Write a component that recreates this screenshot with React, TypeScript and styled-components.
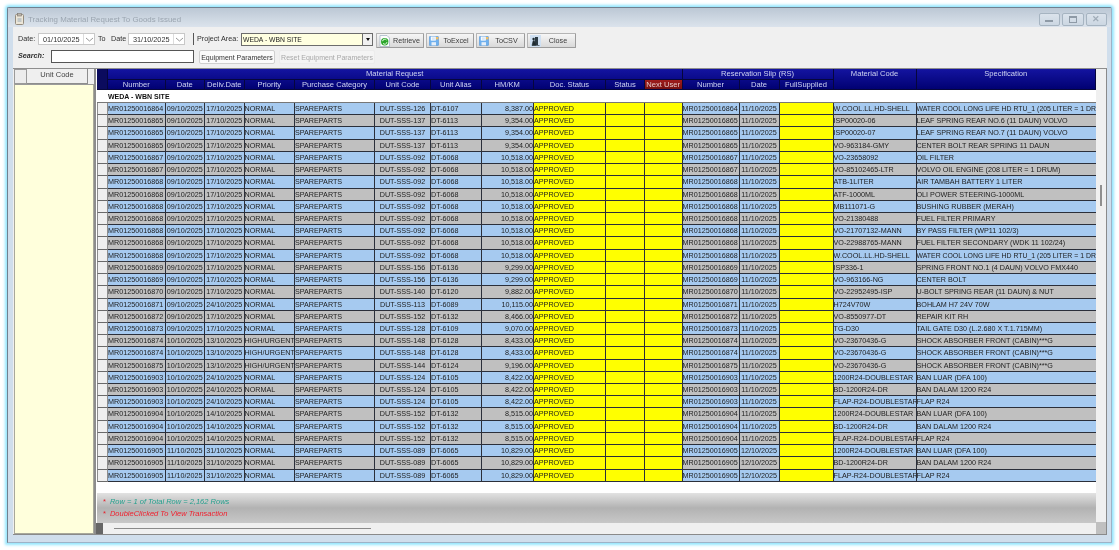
import React from "react";
import styled, { createGlobalStyle } from "styled-components";

const GlobalStyle = createGlobalStyle`
  html, body {
    margin: 0;
    background: #ffffff;
    font-family: "Liberation Sans", Arial, sans-serif;
  }
  * { box-sizing: border-box; }
`;

const COLUMNS =
  "11px 57.5px 39.5px 39.5px 50.5px 80px 56px 50.5px 52.5px 72px 39px 37.5px 57px 40px 54px 83px 179.5px";

type Row = {
  no: string;
  date: string;
  deliv: string;
  priority: string;
  unit: string;
  alias: string;
  hm: string;
  rsDate: string;
  code: string;
  spec: string;
};

const row = (
  no: string,
  date: string,
  deliv: string,
  priority: string,
  unit: string,
  alias: string,
  hm: string,
  rsDate: string,
  code: string,
  spec: string
): Row => ({ no, date, deliv, priority, unit, alias, hm, rsDate, code, spec });

const D09 = "09/10/2025";
const D10 = "10/10/2025";
const D11 = "11/10/2025";
const D12 = "12/10/2025";
const D13 = "13/10/2025";
const D14 = "14/10/2025";
const D17 = "17/10/2025";
const D24 = "24/10/2025";
const D31 = "31/10/2025";
const NOR = "NORMAL";
const HI = "HIGH/URGENT";
const S092 = "DUT-SSS-092";
const COOL = "WATER COOL LONG LIFE HD RTU_1 (205 LITER = 1 DR";

const rows: Row[] = [
  row("864", D09, D17, NOR, "DUT-SSS-126", "DT-6107", "8,387.00", D11, "W.COOL.LL.HD-SHELL", COOL),
  row("865", D09, D17, NOR, "DUT-SSS-137", "DT-6113", "9,354.00", D11, "ISP00020-06", "LEAF SPRING REAR NO.6 (11 DAUN) VOLVO"),
  row("865", D09, D17, NOR, "DUT-SSS-137", "DT-6113", "9,354.00", D11, "ISP00020-07", "LEAF SPRING REAR NO.7 (11 DAUN) VOLVO"),
  row("865", D09, D17, NOR, "DUT-SSS-137", "DT-6113", "9,354.00", D11, "VO-963184-GMY", "CENTER BOLT REAR SPRING 11 DAUN"),
  row("867", D09, D17, NOR, S092, "DT-6068", "10,518.00", D11, "VO-23658092", "OIL FILTER"),
  row("867", D09, D17, NOR, S092, "DT-6068", "10,518.00", D11, "VO-85102465-LTR", "VOLVO OIL ENGINE (208 LITER = 1 DRUM)"),
  row("868", D09, D17, NOR, S092, "DT-6068", "10,518.00", D11, "ATB-1LITER", "AIR TAMBAH BATTERY 1 LITER"),
  row("868", D09, D17, NOR, S092, "DT-6068", "10,518.00", D11, "ATF-1000ML", "OLI POWER STEERING-1000ML"),
  row("868", D09, D17, NOR, S092, "DT-6068", "10,518.00", D11, "MB111071-G", "BUSHING RUBBER (MERAH)"),
  row("868", D09, D17, NOR, S092, "DT-6068", "10,518.00", D11, "VO-21380488", "FUEL FILTER PRIMARY"),
  row("868", D09, D17, NOR, S092, "DT-6068", "10,518.00", D11, "VO-21707132-MANN", "BY PASS FILTER (WP11 102/3)"),
  row("868", D09, D17, NOR, S092, "DT-6068", "10,518.00", D11, "VO-22988765-MANN", "FUEL FILTER SECONDARY (WDK 11 102/24)"),
  row("868", D09, D17, NOR, S092, "DT-6068", "10,518.00", D11, "W.COOL.LL.HD-SHELL", COOL),
  row("869", D09, D17, NOR, "DUT-SSS-156", "DT-6136", "9,299.00", D11, "ISP336-1", "SPRING FRONT NO.1 (4 DAUN) VOLVO FMX440"),
  row("869", D09, D17, NOR, "DUT-SSS-156", "DT-6136", "9,299.00", D11, "VO-963166-NG", "CENTER BOLT"),
  row("870", D09, D17, NOR, "DUT-SSS-140", "DT-6120", "9,882.00", D11, "VO-22952495-ISP", "U-BOLT SPRING REAR (11 DAUN) & NUT"),
  row("871", D09, D24, NOR, "DUT-SSS-113", "DT-6089", "10,115.00", D11, "H724V70W", "BOHLAM H7 24V 70W"),
  row("872", D09, D17, NOR, "DUT-SSS-152", "DT-6132", "8,466.00", D11, "VO-8550977-DT", "REPAIR KIT RH"),
  row("873", D09, D17, NOR, "DUT-SSS-128", "DT-6109", "9,070.00", D11, "TG-D30", "TAIL GATE D30 (L.2.680 X T.1.715MM)"),
  row("874", D10, D13, HI, "DUT-SSS-148", "DT-6128", "8,433.00", D11, "VO-23670436-G", "SHOCK ABSORBER FRONT (CABIN)***G"),
  row("874", D10, D13, HI, "DUT-SSS-148", "DT-6128", "8,433.00", D11, "VO-23670436-G", "SHOCK ABSORBER FRONT (CABIN)***G"),
  row("875", D10, D13, HI, "DUT-SSS-144", "DT-6124", "9,196.00", D11, "VO-23670436-G", "SHOCK ABSORBER FRONT (CABIN)***G"),
  row("903", D10, D24, NOR, "DUT-SSS-124", "DT-6105", "8,422.00", D11, "1200R24-DOUBLESTAR", "BAN LUAR (DFA 100)"),
  row("903", D10, D24, NOR, "DUT-SSS-124", "DT-6105", "8,422.00", D11, "BD-1200R24-DR", "BAN DALAM 1200 R24"),
  row("903", D10, D24, NOR, "DUT-SSS-124", "DT-6105", "8,422.00", D11, "FLAP-R24-DOUBLESTAR", "FLAP R24"),
  row("904", D10, D14, NOR, "DUT-SSS-152", "DT-6132", "8,515.00", D11, "1200R24-DOUBLESTAR", "BAN LUAR (DFA 100)"),
  row("904", D10, D14, NOR, "DUT-SSS-152", "DT-6132", "8,515.00", D11, "BD-1200R24-DR", "BAN DALAM 1200 R24"),
  row("904", D10, D14, NOR, "DUT-SSS-152", "DT-6132", "8,515.00", D11, "FLAP-R24-DOUBLESTAR", "FLAP R24"),
  row("905", D11, D31, NOR, "DUT-SSS-089", "DT-6065", "10,829.00", D12, "1200R24-DOUBLESTAR", "BAN LUAR (DFA 100)"),
  row("905", D11, D31, NOR, "DUT-SSS-089", "DT-6065", "10,829.00", D12, "BD-1200R24-DR", "BAN DALAM 1200 R24"),
  row("905", D11, D31, NOR, "DUT-SSS-089", "DT-6065", "10,829.00", D12, "FLAP-R24-DOUBLESTAR", "FLAP R24"),
];

function ClipboardIcon() {
  return (
    <svg width="9" height="12" viewBox="0 0 9 12">
      <rect x="0.5" y="1.5" width="8" height="10" rx="1" fill="#ece6d8" stroke="#958c7e" />
      <rect x="2.5" y="0.5" width="4" height="2.5" fill="#bdb6aa" stroke="#7c756e" strokeWidth="0.6" />
      <path d="M2.5 6h4M2.5 8h4" stroke="#8497ad" strokeWidth="0.8" />
    </svg>
  );
}

function RefreshIcon() {
  return (
    <svg width="11" height="12" viewBox="0 0 11 12">
      <path d="M1 .5h7l2.5 2.5v8.5H1z" fill="#fdfdfd" stroke="#9fb0c2" strokeWidth="0.7" />
      <circle cx="5.7" cy="6.7" r="3.7" fill="#2ba52b" />
      <path d="M3.6 6.2a2.2 2.2 0 0 1 3.9-1.2M7.9 7.2a2.2 2.2 0 0 1-3.9 1.2" fill="none" stroke="#e8ffe8" strokeWidth="1" />
    </svg>
  );
}

function SaveIcon() {
  return (
    <svg width="10" height="10" viewBox="0 0 10 10">
      <rect x="0.3" y="0.5" width="9.2" height="9" rx="0.6" fill="#6fb0ee" stroke="#4a8fd0" strokeWidth="0.5" />
      <rect x="1.8" y="0.6" width="5" height="4" fill="#ffffff" />
      <path d="M2.8 2h3M2.8 3.2h3" stroke="#9cbfe2" strokeWidth="0.5" />
      <rect x="2.5" y="6.2" width="4.5" height="3.2" fill="#e6eff8" />
      <rect x="7" y="1" width="2.4" height="2.4" fill="#f3bf62" />
    </svg>
  );
}

function ExitIcon() {
  return (
    <svg width="11" height="12" viewBox="0 0 11 12">
      <rect x="0" y="0" width="11" height="12" fill="#cfe0f2" />
      <path d="M5 2h3v8H5z" fill="#2c3a44" />
      <circle cx="3.6" cy="4" r="1.2" fill="#1e2a30" />
      <path d="M2 10.5l1.2-4.8h1.3l1.2 4.8zM5.5 10.5h4" fill="#1e2a30" stroke="#1e2a30" strokeWidth="0.6" />
    </svg>
  );
}

function CaretDown() {
  return (
    <svg width="9" height="5" viewBox="0 0 9 5">
      <path d="M1 1l3.5 3L8 1" fill="none" stroke="#8c8c8c" strokeWidth="0.9" />
    </svg>
  );
}

const Page = styled.div`
  width: 1119px;
  height: 550px;
  padding: 7px;
  overflow: hidden;
`;

const Window = styled.div`
  height: 536px;
  display: flex;
  flex-direction: column;
  padding: 0 4px 7px 5px;
  background: #d0deec;
  border: 1px solid #71808f;
  border-bottom-color: #9db2c6;
  border-right-color: #9db2c6;
  border-radius: 2px 2px 0 0;
  box-shadow: 0 0 3px 2px #93e6fd;
  filter: blur(0.35px);
`;

const TitleBar = styled.div`
  flex: 0 0 19px;
  margin: 0 -4px 0 -5px;
  padding: 3px 4px 0 7px;
  display: flex;
  align-items: center;
  gap: 4px;
  background: linear-gradient(#bcc8d5, #dbe3ec);
`;

const TitleText = styled.span`
  flex: 1;
  font-size: 7.9px;
  color: #9ba5b0;
`;

const CaptionBtn = styled.div`
  width: 21.5px;
  height: 13px;
  margin-left: -2px;
  display: flex;
  align-items: center;
  justify-content: center;
  border: 1px solid #a6b4c1;
  border-radius: 2px;
  background: linear-gradient(#dbe3ec, #ccd7e2);
`;

const Toolbar = styled.div`
  flex: 0 0 41px;
  padding: 6px 0 0 5px;
  background: #f0f0f0;
  display: flex;
  flex-direction: column;
  gap: 2px;
`;

const ToolRow = styled.div`
  display: flex;
  align-items: flex-start;
  gap: 3px;
`;

const Label = styled.span<{ $w: number; $strong?: boolean }>`
  width: ${(p) => p.$w}px;
  height: 12px;
  line-height: 12px;
  white-space: nowrap;
  font-size: 7.2px;
  color: #2e2e2e;
  font-weight: ${(p) => (p.$strong ? "bold" : "normal")};
  font-style: ${(p) => (p.$strong ? "italic" : "normal")};
`;

const DateBox = styled.div`
  width: 57px;
  height: 12px;
  padding-left: 4px;
  display: flex;
  align-items: center;
  justify-content: space-between;
  font-size: 7.3px;
  color: #333;
  background: #fff;
  border: 1px solid #c8c8c8;
`;

const CaretZone = styled.span`
  width: 11px;
  height: 100%;
  display: flex;
  align-items: center;
  justify-content: center;
  border-left: 1px solid #dcdcdc;
`;

const Divider = styled.div`
  width: 1px;
  height: 12px;
  margin-left: 5px;
  background: #555;
`;

const Combo = styled.div`
  width: 132px;
  height: 13px;
  padding-left: 1px;
  display: flex;
  align-items: center;
  justify-content: space-between;
  font-size: 6.8px;
  color: #222;
  background: #ffffe0;
  border: 1px solid #6c6c6c;
`;

const ComboArrow = styled.span`
  width: 10px;
  height: 100%;
  display: flex;
  align-items: center;
  justify-content: center;
  background: #f0f0f0;
  border-left: 1px solid #6c6c6c;
  &::after {
    content: "";
    border-left: 2.5px solid transparent;
    border-right: 2.5px solid transparent;
    border-top: 3px solid #111;
  }
`;

const ActionGroup = styled.div`
  display: flex;
  gap: 2px;
`;

const ActionBtn = styled.button<{ $w: number }>`
  width: ${(p) => p.$w}px;
  height: 15px;
  padding: 0 0 0 2px;
  display: flex;
  align-items: center;
  font-family: inherit;
  font-size: 7.2px;
  color: #3a3a3a;
  border: 1px solid #b4b4b4;
  border-right-color: #9c9c9c;
  border-bottom-color: #9c9c9c;
  border-radius: 1px;
  background: linear-gradient(#f6f6f6, #d9d9d9);
`;

const ActionText = styled.span`
  flex: 1;
  text-align: center;
`;

const SearchBox = styled.div`
  width: 143px;
  height: 13px;
  margin-left: 2px;
  background: #fff;
  border: 1px solid #555;
`;

const ParamBtn = styled.button<{ $w: number; $off?: boolean }>`
  width: ${(p) => p.$w}px;
  height: 14px;
  margin-left: ${(p) => (p.$off ? 1 : 2)}px;
  padding: 0;
  font-family: inherit;
  font-size: 7px;
  white-space: nowrap;
  color: ${(p) => (p.$off ? "#a8a8a8" : "#333")};
  border: 1px solid ${(p) => (p.$off ? "#ececec" : "#cfcfcf")};
  border-radius: 2px;
  background: ${(p) => (p.$off ? "#f4f4f4" : "#fbfbfb")};
`;

const Main = styled.div`
  flex: 1;
  min-height: 0;
  display: flex;
  border-top: 1px solid #8e8e8e;
  border-right: 1px solid #8a8a8a;
  border-bottom: 1px solid #8a8a8a;
  background: #f0f0f0;
`;

const SidePanel = styled.div`
  width: 83px;
  padding-left: 1px;
  display: flex;
  flex-direction: column;
  border-right: 2px solid #8d8d8d;
`;

const SideHead = styled.div`
  height: 15px;
  width: 74px;
  display: flex;
`;

const SideCorner = styled.div`
  width: 13px;
  background: #ececec;
  border: 1px solid #9a9a9a;
`;

const SideTitle = styled.div`
  flex: 1;
  font-size: 7.5px;
  line-height: 12px;
  text-align: center;
  color: #444;
  background: #efefef;
  border: 1px solid #8d8d8d;
  border-top: 0;
  border-left: 0;
`;

const SideBody = styled.div`
  flex: 1;
  background: #ffffdc;
  border: 1px solid #a8a89a;
  border-top: 1px solid #9a9a9a;
`;

const GridArea = styled.div`
  flex: 1;
  min-width: 0;
  display: flex;
`;

const GridColumn = styled.div`
  width: 1000px;
  padding-left: 1px;
  display: flex;
  flex-direction: column;
  background: #fff;
`;

const HeaderGrid = styled.div`
  height: 21px;
  display: grid;
  grid-template-columns: ${COLUMNS};
  grid-template-rows: 10.5px 10.5px;
  background: linear-gradient(#1414a0, #000070);
`;

const HeaderCell = styled.div<{ $span?: number; $rows?: number; $alert?: boolean }>`
  grid-column: span ${(p) => p.$span ?? 1};
  grid-row: span ${(p) => p.$rows ?? 1};
  font-size: 7.6px;
  line-height: 10px;
  text-align: center;
  white-space: nowrap;
  overflow: hidden;
  color: ${(p) => (p.$alert ? "#e8c8c8" : "#cfd4f2")};
  background: ${(p) => (p.$alert ? "linear-gradient(#a01c1c, #761010)" : "transparent")};
  border-right: 1px solid #06063c;
  border-bottom: 1px solid #06063c;
`;

const HeaderGutter = styled(HeaderCell)`
  background: #0b0b5e;
`;

const GroupBand = styled.div`
  height: 13px;
  padding-left: 11px;
  font-size: 7px;
  font-weight: bold;
  line-height: 13px;
  color: #111;
  background: #fff;
  border-bottom: 1px solid #777;
`;

const Rows = styled.div`
  display: flex;
  flex-direction: column;
  height: 379px;
`;

const RowLine = styled.div<{ $alt: boolean }>`
  flex: 1;
  display: grid;
  grid-template-columns: ${COLUMNS};
  min-height: 0;
  background: ${(p) => (p.$alt ? "#c0c0c0" : "#a6caf0")};
`;

const Selector = styled.div`
  background: #efefef;
  border-right: 1px solid #8d8d8d;
  border-bottom: 1px solid #6a6a6a;
  border-left: 1px solid #8d8d8d;
`;

const Cell = styled.div<{ $align?: string; $flag?: boolean }>`
  font-size: 7.2px;
  line-height: 11px;
  color: #1c1c1c;
  white-space: nowrap;
  overflow: hidden;
  text-align: ${(p) => p.$align ?? "left"};
  background: ${(p) => (p.$flag ? "#ffff00" : "transparent")};
  border-right: 1px solid #2b2f3a;
  border-bottom: 1px solid #2b2f3a;
`;

const SpecCell = styled(Cell)<{ $tight: boolean }>`
  font-size: ${(p) => (p.$tight ? "6.9px" : "7.2px")};
  border-right: 0;
`;

const Spacer = styled.div`
  height: 11px;
  background: #fff;
`;

const NotesBar = styled.div`
  height: 30px;
  padding: 3px 0 0 6px;
  display: flex;
  flex-direction: column;
  gap: 0.5px;
  background: linear-gradient(#e2e2e2, #b2b2b2 50%, #c8c8c8);
`;

const Note = styled.div<{ $tone: string }>`
  height: 11px;
  line-height: 11px;
  display: flex;
  gap: 4px;
  font-size: 7.5px;
  font-style: italic;
  color: ${(p) => p.$tone};
`;

const Star = styled.span`
  color: #e8202c;
  font-style: normal;
`;

const HScroll = styled.div`
  flex: 1;
  display: flex;
  align-items: center;
  background: #f0f0f0;
`;

const HScrollEnd = styled.div`
  width: 7px;
  height: 100%;
  margin-left: -1px;
  background: #666;
`;

const HScrollThumb = styled.div`
  width: 257px;
  height: 1px;
  margin-left: 11px;
  background: #8a8a8a;
`;

const VScroll = styled.div`
  flex: 1;
  display: flex;
  flex-direction: column;
  align-items: center;
  padding-top: 116px;
  background: #f0f0f0;
`;

const VScrollThumb = styled.div`
  width: 1.5px;
  height: 21px;
  background: #8f8f8f;
`;

const VScrollFill = styled.div`
  flex: 1;
`;

const ScrollCorner = styled.div`
  width: 100%;
  height: 12px;
  background: #c0c0c0;
`;

const MinGlyph = styled.span`
  width: 8px;
  height: 2px;
  margin-top: 3px;
  background: #8e9aa6;
`;

const MaxGlyph = styled.span`
  width: 8px;
  height: 7px;
  border: 1px solid #8e9aa6;
  border-top-width: 2px;
`;

const CloseGlyph = styled.span`
  font-size: 9px;
  line-height: 9px;
  font-weight: bold;
  color: #a0acb8;
`;

export default function App() {
  return (
    <Page>
      <GlobalStyle />
      <Window>
        <TitleBar>
          <ClipboardIcon />
          <TitleText>Tracking Material Request To Goods Issued</TitleText>
          <CaptionBtn>
            <MinGlyph />
          </CaptionBtn>
          <CaptionBtn>
            <MaxGlyph />
          </CaptionBtn>
          <CaptionBtn>
            <CloseGlyph>✕</CloseGlyph>
          </CaptionBtn>
        </TitleBar>

        <Toolbar>
          <ToolRow>
            <Label $w={17}>Date:</Label>
            <DateBox>
              01/10/2025
              <CaretZone>
                <CaretDown />
              </CaretZone>
            </DateBox>
            <Label $w={10}>To</Label>
            <Label $w={14}>Date</Label>
            <DateBox>
              31/10/2025
              <CaretZone>
                <CaretDown />
              </CaretZone>
            </DateBox>
            <Divider />
            <Label $w={41}>Project Area:</Label>
            <Combo>
              WEDA - WBN SITE
              <ComboArrow />
            </Combo>
            <ActionGroup>
              <ActionBtn $w={48}>
                <RefreshIcon />
                <ActionText>Retrieve</ActionText>
              </ActionBtn>
              <ActionBtn $w={48}>
                <SaveIcon />
                <ActionText>ToExcel</ActionText>
              </ActionBtn>
              <ActionBtn $w={49}>
                <SaveIcon />
                <ActionText>ToCSV</ActionText>
              </ActionBtn>
              <ActionBtn $w={49}>
                <ExitIcon />
                <ActionText>Close</ActionText>
              </ActionBtn>
            </ActionGroup>
          </ToolRow>
          <ToolRow>
            <Label $w={28} $strong>
              Search:
            </Label>
            <SearchBox />
            <ParamBtn $w={76}>Equipment Parameters</ParamBtn>
            <ParamBtn $w={96} $off>
              Reset Equipment Parameters
            </ParamBtn>
          </ToolRow>
        </Toolbar>

        <Main>
          <SidePanel>
            <SideHead>
              <SideCorner />
              <SideTitle>Unit Code</SideTitle>
            </SideHead>
            <SideBody />
          </SidePanel>

          <GridArea>
            <GridColumn>
              <HeaderGrid>
                <HeaderGutter $rows={2} />
                <HeaderCell $span={11}>Material Request</HeaderCell>
                <HeaderCell $span={3}>Reservation Slip (RS)</HeaderCell>
                <HeaderCell $rows={2}>Material Code</HeaderCell>
                <HeaderCell $rows={2}>Specification</HeaderCell>
                <HeaderCell>Number</HeaderCell>
                <HeaderCell>Date</HeaderCell>
                <HeaderCell>Deliv.Date</HeaderCell>
                <HeaderCell>Priority</HeaderCell>
                <HeaderCell>Purchase Category</HeaderCell>
                <HeaderCell>Unit Code</HeaderCell>
                <HeaderCell>Unit Alias</HeaderCell>
                <HeaderCell>HM/KM</HeaderCell>
                <HeaderCell>Doc. Status</HeaderCell>
                <HeaderCell>Status</HeaderCell>
                <HeaderCell $alert>Next User</HeaderCell>
                <HeaderCell>Number</HeaderCell>
                <HeaderCell>Date</HeaderCell>
                <HeaderCell>FullSupplied</HeaderCell>
              </HeaderGrid>

              <GroupBand>WEDA - WBN SITE</GroupBand>

              <Rows>
                {rows.map((r, i) => (
                  <RowLine key={i} $alt={i % 2 === 1}>
                    <Selector />
                    <Cell>MR01250016{r.no}</Cell>
                    <Cell $align="center">{r.date}</Cell>
                    <Cell $align="center">{r.deliv}</Cell>
                    <Cell>{r.priority}</Cell>
                    <Cell>SPAREPARTS</Cell>
                    <Cell $align="center">{r.unit}</Cell>
                    <Cell>{r.alias}</Cell>
                    <Cell $align="right">{r.hm}</Cell>
                    <Cell $flag>APPROVED</Cell>
                    <Cell $flag />
                    <Cell $flag />
                    <Cell>MR01250016{r.no}</Cell>
                    <Cell $align="center">{r.rsDate}</Cell>
                    <Cell $flag />
                    <Cell>{r.code}</Cell>
                    <SpecCell $tight={r.spec === COOL}>{r.spec}</SpecCell>
                  </RowLine>
                ))}
              </Rows>

              <Spacer />

              <NotesBar>
                <Note $tone="#25a08e">
                  <Star>*</Star>
                  Row = 1 of Total Row = 2,162 Rows
                </Note>
                <Note $tone="#f0202e">
                  <Star>*</Star>
                  DoubleClicked To View Transaction
                </Note>
              </NotesBar>

              <HScroll>
                <HScrollEnd />
                <HScrollThumb />
              </HScroll>
            </GridColumn>

            <VScroll>
              <VScrollThumb />
              <VScrollFill />
              <ScrollCorner />
            </VScroll>
          </GridArea>
        </Main>
      </Window>
    </Page>
  );
}
